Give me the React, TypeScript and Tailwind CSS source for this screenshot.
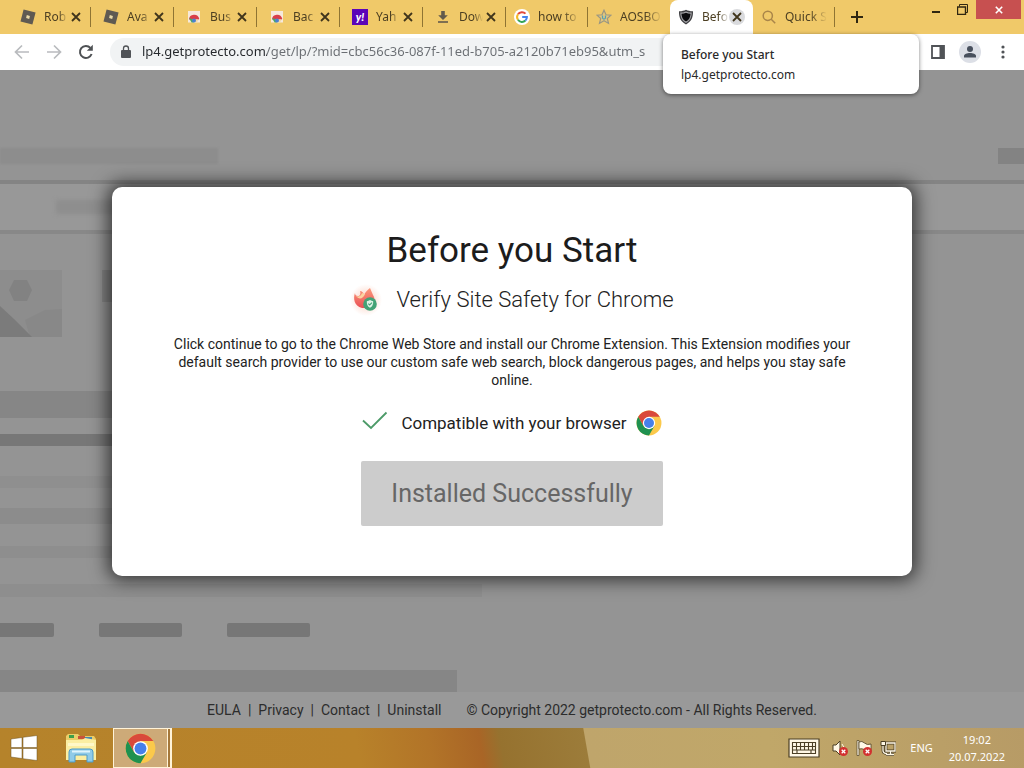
import type { ReactNode } from "react";

type Tab = {
  title: string;
  icon: ReactNode;
  closable?: boolean;
  active?: boolean;
};

function RobloxIcon() {
  return (
    <svg viewBox="0 0 16 16" className="size-4 shrink-0">
      <path d="M3.6 0.6 15.6 3.6 12.4 15.6 0.5 12.5Z" fill="#5f5a52" />
      <path d="M6.8 6.1 9.9 6.9 9.2 9.9 6.1 9.1Z" fill="#e9d9a8" />
    </svg>
  );
}

function WebStoreIcon() {
  return (
    <svg viewBox="0 0 16 16" className="size-4 shrink-0">
      <path d="M2 2h12v11.5H2z" fill="#f6e9dc" />
      <path d="M3 10.5A5.2 5.2 0 0 1 13.2 9.6L13 10.4H8Z" fill="#d93f48" />
      <path d="M3 9.2 5.6 13.6H8L6.4 10Z" fill="#4aa765" />
      <path d="M12.8 10.4 10.8 13.6H7.6L9.4 10.4Z" fill="#f1d9a8" />
      <circle cx="8" cy="11.4" r="2" fill="#4b7fd0" />
    </svg>
  );
}

function YahooIcon() {
  return (
    <span className="flex size-4 shrink-0 items-center justify-center bg-[#5b05b8] font-['Lato',sans-serif] text-[11px] leading-4 font-black text-white italic">
      y!
    </span>
  );
}

function DownloadIcon() {
  return (
    <svg viewBox="0 0 16 16" className="size-4 shrink-0" fill="#625a4c">
      <path d="M6.2 2h3.6v4.2h3L8 11 3.2 6.2h3Z" />
      <path d="M3 12.2h10v1.6H3z" />
    </svg>
  );
}

function GoogleIcon() {
  return (
    <svg viewBox="0 0 16 16" className="size-4 shrink-0" fill="none">
      <circle cx="8" cy="8" r="8" fill="#fff" />
      <g strokeWidth="2">
        <path d="M4 5.2A4.9 4.9 0 0 1 11.5 4.6" stroke="#e24a3b" />
        <path d="M4 10.8A4.9 4.9 0 0 1 4 5.2" stroke="#f4b928" />
        <path d="M11.4 11.6A4.9 4.9 0 0 1 4 10.8" stroke="#36a556" />
        <path d="M8.2 8.1H12.9A4.9 4.9 0 0 1 11.4 11.6" stroke="#4383ee" />
      </g>
    </svg>
  );
}

function StarIcon() {
  return (
    <svg viewBox="0 0 16 16" className="size-4 shrink-0">
      <path
        d="M8 1.2 10 5.8 15 6.2 11.3 9.5 12.5 14.4 8 11.8 3.5 14.4 4.7 9.5 1 6.2 6 5.8Z"
        fill="#e4c67c"
        stroke="#9b9782"
        strokeWidth="1.2"
      />
      <path d="M6.5 6.4V8.6a1.5 1.5 0 0 0 3 0V6.4" fill="none" stroke="#55a0b5" strokeWidth="1.3" />
    </svg>
  );
}

function ShieldIcon() {
  return (
    <svg viewBox="0 0 16 16" className="size-4 shrink-0">
      <path
        d="M8 .8C10 1.8 12.5 2.4 15 2.3 15.2 8.6 13.2 12.8 8 15.4 2.8 12.8.8 8.6 1 2.3 3.5 2.4 6 1.8 8 .8Z"
        fill="#3f3f42"
      />
      <path
        d="M8 2.4C9.8 3.2 11.6 3.6 13.7 3.6 13.6 8.4 12 11.8 8 13.9 4 11.8 2.4 8.4 2.3 3.6 4.4 3.6 6.2 3.2 8 2.4Z"
        fill="#a9a9ac"
      />
      <path
        d="M8 3.7C9.4 4.3 11 4.7 12.6 4.7 12.4 8.4 11 11 8 12.6 5 11 3.6 8.4 3.4 4.7 5 4.7 6.6 4.3 8 3.7Z"
        fill="#0c0c0e"
      />
    </svg>
  );
}

function SearchIcon() {
  return (
    <svg viewBox="0 0 16 16" className="size-4 shrink-0" fill="none" stroke="#a98549" strokeWidth="1.5">
      <circle cx="6.8" cy="6.8" r="4.6" />
      <path d="m10.2 10.2 4 4" />
    </svg>
  );
}

function ChromeLogo({ className }: { className: string }) {
  return (
    <svg viewBox="0 0 48 48" className={className}>
      <circle cx="24" cy="24" r="23" fill="#fbc94b" />
      <path d="M4.1 12.5A23 23 0 0 1 43.9 12.5H24L14 29.8Z" fill="#d9493b" />
      <path d="M4.1 12.5A23 23 0 0 0 24 47L34 29.7 24 35 14 29.8Z" fill="#1f9150" />
      <circle cx="24" cy="24" r="11.4" fill="#fff" />
      <circle cx="24" cy="24" r="9.2" fill="#4680ea" />
    </svg>
  );
}

function ExtensionLogo() {
  return (
    <svg viewBox="0 0 32 32" className="size-8 shrink-0">
      <defs>
        <radialGradient id="glow">
          <stop offset="50%" stopColor="#fde6de" />
          <stop offset="100%" stopColor="#fff" />
        </radialGradient>
        <linearGradient id="flame" x1="0" y1="0" x2="0" y2="1">
          <stop offset="0" stopColor="#fb9a7c" />
          <stop offset="1" stopColor="#ea4f55" />
        </linearGradient>
      </defs>
      <circle cx="16" cy="16" r="16" fill="url(#glow)" />
      <path
        d="M5 9C3 14 4 22 12 24L22 24C26 20 25 14 23 11L20 4C17 6 15 9 14 11 13 8 12 7 10 7 11 10 10 12 8 12 6 12 5 11 5 9Z"
        fill="url(#flame)"
      />
      <path d="M6 12C9 16 13 15 15 10L12 9C11 12 9 13 6 12Z" fill="#fbd3a0" />
      <circle cx="20" cy="20" r="6.8" fill="#43a276" />
      <path d="M16.8 17.2C18 17.2 19 16.8 20 16.1 21 16.8 22 17.2 23.2 17.2 23.3 20.4 22.4 22.4 20 23.8 17.6 22.4 16.7 20.4 16.8 17.2Z" fill="#dff3e6" />
      <path d="m18.3 19.6 1.4 1.4 2.3-2.4" fill="none" stroke="#43a276" strokeWidth="1.1" />
    </svg>
  );
}

const tabs: Tab[] = [
  { title: "Rob", icon: <RobloxIcon />, closable: true },
  { title: "Ava", icon: <RobloxIcon />, closable: true },
  { title: "Bus", icon: <WebStoreIcon />, closable: true },
  { title: "Bac", icon: <WebStoreIcon />, closable: true },
  { title: "Yah", icon: <YahooIcon />, closable: true },
  { title: "Dow", icon: <DownloadIcon />, closable: true },
  { title: "how to", icon: <GoogleIcon /> },
  { title: "AOSBO", icon: <StarIcon /> },
  { title: "Befo", icon: <ShieldIcon />, closable: true, active: true },
  { title: "Quick S", icon: <SearchIcon /> },
];

function CloseGlyph() {
  return (
    <svg viewBox="0 0 10 10" className="size-[10px]" fill="none" stroke="currentColor" strokeWidth="1.8">
      <path d="m1 1 8 8M9 1 1 9" />
    </svg>
  );
}

function BrowserTab({ tab }: { tab: Tab }) {
  const shape = tab.active
    ? "w-[83px] rounded-t-lg bg-white px-2"
    : tab.closable
      ? "w-[83px] pl-3 pr-[7px]"
      : "w-[82px] px-2";
  return (
    <div className={`flex h-full shrink-0 items-center ${shape}`}>
      {tab.icon}
      <span className="ml-2 min-w-0 flex-1 overflow-hidden text-xs whitespace-nowrap text-[#4c3f22] [mask-image:linear-gradient(to_right,#000_60%,transparent)]">
        {tab.title}
      </span>
      {tab.closable && (
        <button
          type="button"
          aria-label={`Close ${tab.title}`}
          className={`flex size-4 shrink-0 items-center justify-center rounded-full text-[#40351c] ${
            tab.active ? "bg-[#d9dadd]" : ""
          }`}
        >
          <CloseGlyph />
        </button>
      )}
    </div>
  );
}

function TitleBar() {
  return (
    <div className="flex h-[34px] bg-[#f0c969] pl-2">
      <div className="flex min-w-0 flex-1">
        {tabs.map((tab, i) => (
          <div key={tab.title} className="flex items-center">
            <BrowserTab tab={tab} />
            {!tab.active && !tabs[i + 1]?.active && (
              <span className="-ml-px h-5 w-px bg-[#8f7433]" />
            )}
          </div>
        ))}
        <button type="button" aria-label="New tab" className="ml-3 flex w-5 items-center justify-center">
          <svg viewBox="0 0 12 12" className="size-3" stroke="#2f2611" strokeWidth="2">
            <path d="M6 0v12M0 6h12" />
          </svg>
        </button>
      </div>
      <div className="flex items-start pr-[3px]">
        <button type="button" aria-label="Minimize" className="flex h-[19px] w-6 items-center justify-center">
          <span className="mt-1 h-[2px] w-2 bg-[#2f2611]" />
        </button>
        <button type="button" aria-label="Restore" className="flex h-[19px] w-7 items-center justify-center">
          <svg viewBox="0 0 11 11" className="size-[11px]" fill="none" stroke="#2f2611">
            <path d="M2.5 2.5V.5h8v8h-2" />
            <path d="M.5 3h8v7.500h-8z" strokeWidth="1.4" />
          </svg>
        </button>
        <button type="button" aria-label="Close window" className="flex h-[19px] w-[45px] items-center justify-center bg-[#c75050] text-white">
          <svg viewBox="0 0 10 10" className="size-2" fill="none" stroke="currentColor" strokeWidth="2">
            <path d="m1 1 8 8M9 1 1 9" />
          </svg>
        </button>
      </div>
    </div>
  );
}

function Toolbar() {
  return (
    <div className="flex h-9 items-center bg-white pr-[11px]">
      <button type="button" aria-label="Back" className="ml-[14px] text-[#b9bbbe]">
        <svg viewBox="0 0 16 16" className="size-4" fill="none" stroke="currentColor" strokeWidth="1.7">
          <path d="M15 8H2M8 1.500 1.500 8 8 14.500" />
        </svg>
      </button>
      <button type="button" aria-label="Forward" className="ml-4 text-[#b9bbbe]">
        <svg viewBox="0 0 16 16" className="size-4" fill="none" stroke="currentColor" strokeWidth="1.7">
          <path d="M1 8h13M8 1.500 14.500 8 8 14.500" />
        </svg>
      </button>
      <button type="button" aria-label="Reload" className="ml-4 text-[#4e5154]">
        <svg viewBox="0 0 16 16" className="size-4" fill="none" stroke="currentColor" strokeWidth="2">
          <path d="M13.600 10A6 6 0 1 1 12.400 3.900" />
          <path d="M14.800.8v6H8.800Z" fill="currentColor" stroke="none" />
        </svg>
      </button>
      <div className="ml-4 flex h-7 flex-1 items-center rounded-full bg-[#f1f3f4] pl-[11px]">
        <svg viewBox="0 0 10 14" className="h-[14px] w-[10px] shrink-0" fill="#505357">
          <path d="M1 5h8a1 1 0 0 1 1 1v6a1 1 0 0 1-1 1H1a1 1 0 0 1-1-1V6a1 1 0 0 1 1-1Z" />
          <path d="M2.500 5.500V3.500a2.500 2.500 0 0 1 5 0v2" fill="none" stroke="#505357" strokeWidth="1.300" />
        </svg>
        <input
          type="text"
          aria-label="Address"
          readOnly
          value="lp4.getprotecto.com/get/lp/?mid=cbc56c36-087f-11ed-b705-a2120b71eb95&utm_s"
          className="ml-[11px] min-w-0 flex-1 bg-[linear-gradient(to_right,#25282c_125px,#6a6e73_125px)] bg-clip-text text-[13px] text-transparent outline-none"
        />
      </div>
      <button type="button" aria-label="Side panel" className="ml-4">
        <svg viewBox="0 0 14 14" className="size-[14px]">
          <path d="M1 1h12v12H1z" fill="none" stroke="#505357" strokeWidth="1.800" />
          <path d="M8.500 1H13v12H8.500z" fill="#505357" />
        </svg>
      </button>
      <button type="button" aria-label="Profile" className="ml-[14px] flex size-[22px] items-center justify-center rounded-full bg-[#dcdfe6]">
        <svg viewBox="0 0 14 14" className="size-[14px]" fill="#48505d">
          <circle cx="7" cy="4" r="3" />
          <path d="M1 12.500V11c0-2 3-3 6-3s6 1 6 3v1.500Z" />
        </svg>
      </button>
      <button type="button" aria-label="Menu" className="ml-3 flex w-5 justify-center">
        <svg viewBox="0 0 4 14" className="h-[14px] w-1" fill="#505357">
          <circle cx="2" cy="2" r="1.600" />
          <circle cx="2" cy="7" r="1.600" />
          <circle cx="2" cy="12" r="1.600" />
        </svg>
      </button>
    </div>
  );
}

function TabTooltip() {
  return (
    <div
      role="tooltip"
      className="absolute top-[34px] left-[663px] z-20 w-64 rounded-lg bg-white px-[18px] pt-[11px] pb-[9px] text-xs leading-5 text-[#2a2a2a] shadow-[0_1px_4px_rgba(0,0,0,0.5)]"
    >
      <p className="font-medium">Before you Start</p>
      <p>lp4.getprotecto.com</p>
    </div>
  );
}

// Greyed-out page skeleton that sits behind the dialog.
function Skeleton() {
  return (
    <div aria-hidden="true" className="flex flex-1 flex-col bg-[#949494]">
      <div className="flex h-[110px] items-end justify-between pb-4">
        <span className="h-4 w-[218px] bg-[#8d8d8d] blur-[1px]" />
        <span className="h-4 w-[26px] bg-[#838383]" />
      </div>
      <div className="h-[54px] border-y-4 border-t-[#848484] border-b-[#888] bg-[#989898] pt-4">
        <span className="ml-14 block h-[14px] w-24 bg-[#8e8e8e] blur-[2px]" />
      </div>
      <div className="mt-9 flex gap-10">
        <svg viewBox="0 0 62 67" className="h-[67px] w-[62px]">
          <path d="M0 0h62v67H0z" fill="#8d8d8d" />
          <path d="M14 10h13l5 10-5 11H14L9 20Z" fill="#828282" />
          <path d="M25 50 45 40 62 39V67H30Z" fill="#888" />
          <path d="M0 36 14 49 32 67H0Z" fill="#7b7b7b" />
        </svg>
        <span className="h-8 w-32 bg-[#858585]" />
      </div>
      <span className="mt-[54px] h-[27px] w-[482px] bg-[#868686]" />
      <span className="mt-4 h-3 w-[482px] bg-[#777]" />
      <span className="mt-[30px] h-3 w-[482px] bg-[#8f8f8f]" />
      <span className="mt-5 h-4 w-[482px] bg-[#8c8c8c]" />
      <span className="mt-[22px] h-3 w-[482px] bg-[#8e8e8e]" />
      <span className="mt-[26px] h-[13px] w-[482px] bg-[#8e8e8e]" />
      <div className="mt-[26px] flex gap-[45px]">
        <span className="h-[14px] w-[54px] rounded-r-xs bg-[#777]" />
        <span className="h-[14px] w-[83px] rounded-xs bg-[#777]" />
        <span className="h-[14px] w-[83px] rounded-xs bg-[#777]" />
      </div>
      <span className="mt-[33px] h-[22px] w-[457px] bg-[#868686]" />
    </div>
  );
}

function StartDialog() {
  return (
    <div className="absolute inset-0 flex items-center justify-center overflow-hidden px-4">
      <section
        role="dialog"
        aria-labelledby="dialog-title"
        className="flex w-full max-w-[800px] flex-col items-center rounded-[10px] bg-white px-[60px] pt-10 pb-[50px] text-center text-[#222] shadow-[0_0_18px_4px_rgba(0,0,0,0.65)]"
      >
        <h1 id="dialog-title" className="text-[35px] leading-[48px] text-[#1c1c1c]">
          Before you Start
        </h1>
        <div className="mt-[7px] flex items-center gap-[14px]">
          <ExtensionLogo />
          <h2 className="text-[22px] leading-9 font-light">Verify Site Safety for Chrome</h2>
        </div>
        <p className="mt-[17px] text-sm leading-[18px]">
          Click continue to go to the Chrome Web Store and install our Chrome Extension. This
          Extension modifies your default search provider to use our custom safe web search, block
          dangerous pages, and helps you stay safe online.
        </p>
        <div className="mt-5 flex items-center">
          <svg viewBox="0 0 26 20" className="mr-[13px] mb-1 h-5 w-[26px]" fill="none" stroke="#4c9a68" strokeWidth="1.800">
            <path d="m1 9.500 8 7.500L24.500 1.500" />
          </svg>
          <span className="text-[17px] leading-7">Compatible with your browser</span>
          <ChromeLogo className="ml-[9px] size-[26px]" />
        </div>
        <button type="button" className="mt-6 rounded-[2px] bg-[#ccc] px-[30px] py-4 text-[25px] leading-[33px] text-[#666]">
          Installed Successfully
        </button>
      </section>
    </div>
  );
}

const footerLinks = ["EULA", "Privacy", "Contact", "Uninstall"];

function PageFooter() {
  return (
    <footer className="flex h-9 items-center justify-center bg-[#999] pb-px text-sm text-[#2c2c2c]">
      <nav className="flex">
        {footerLinks.map((label, i) => (
          <span key={label} className="flex">
            {i > 0 && <span className="mx-[7px]">|</span>}
            <a href="#">{label}</a>
          </span>
        ))}
      </nav>
      <span className="ml-[25px]">© Copyright 2022 getprotecto.com - All Rights Reserved.</span>
    </footer>
  );
}

function RedBadge() {
  return (
    <g>
      <circle cx="11.500" cy="11.500" r="4.500" fill="#d2302f" />
      <path d="m9.700 9.700 3.600 3.600m0-3.600-3.600 3.600" stroke="#fff" strokeWidth="1.300" />
    </g>
  );
}

function Taskbar() {
  return (
    <div className="flex h-10 items-stretch bg-[linear-gradient(80deg,#b5832b_0%,#b8822a_35%,#b27428_42%,#a96526_47%,#96722f_49%,#9c7c3a_57.200%,#bfa56b_57.300%,#c0a769_75%,#b79b66_100%)]">
      <button type="button" aria-label="Start" className="flex w-12 items-center justify-center">
        <svg viewBox="0 0 28 26" className="h-[26px] w-7" fill="#fff" stroke="#6b5120" strokeWidth="0.500">
          <path d="M1 4 12 2.500V12.500H1ZM13 2.300 27 .5V12.500H13ZM1 13.500H12V23.500L1 22ZM13 13.500H27V25.500L13 23.700Z" />
        </svg>
      </button>
      <button type="button" aria-label="File Explorer" className="flex w-[65px] items-center justify-center">
        <svg viewBox="0 0 32 30" className="h-[30px] w-8">
          <path d="M1 3 3 1H13L15 3H29L31 6V26H1Z" fill="#e9cd69" />
          <path d="M4 2h5v3H4z" fill="#3e9e4a" />
          <path d="M13 3h7v3h-7z" fill="#c9543a" />
          <path d="M20 4h7v3h-7z" fill="#4689b0" />
          <path d="M1 7H17L20 5 31 7V27H1Z" fill="#fbeea2" />
          <path d="M3 10H29V13H3Z" fill="#fff8c8" />
          <path d="M4 29V19Q4 16 7 16H25Q28 16 28 19V29H22V22H10V29Z" fill="#8fcbe8" stroke="#4c9bc8" />
          <path d="M7 18.500H25" stroke="#dff4fc" strokeWidth="2" />
        </svg>
      </button>
      <button
        type="button"
        aria-label="Google Chrome"
        className="flex w-[55px] items-center justify-center border border-[#fff3d8] bg-[#cdaa78]"
      >
        <ChromeLogo className="size-[31px]" />
      </button>
      <span className="w-1 border-y border-r-2 border-[#fff3d8] bg-[#a5783a]" />
      <div className="ml-auto flex items-center pr-[19px] text-[11px] text-white">
        <svg viewBox="0 0 32 20" className="h-5 w-8">
          <path d="M1 1h30v18H1z" fill="#fff8e6" stroke="#4b3f25" strokeWidth="1.200" />
          <path
            d="M4 4.500h24M4 8.500h24M4 12h24M4 15.500h24M4.500 4v12M8.500 4v8M12.500 4v8M16.500 4v8M20.500 4v8M24.500 4v8M27.500 4v12M9 12v4M23 12v4"
            fill="none"
            stroke="#4b3f25"
            strokeWidth="1.100"
          />
        </svg>
        <svg viewBox="0 0 16 16" className="ml-3 size-4">
          <path d="M1 5h3l4-4v14l-4-4H1Z" fill="#fff8e6" stroke="#4b3f25" />
          <path d="M10 4q3 3 1 6" fill="none" stroke="#fff8e6" />
          <RedBadge />
        </svg>
        <svg viewBox="0 0 16 16" className="ml-2 size-4">
          <path d="M1 .5h2v15H1Z" fill="#fff8e6" stroke="#4b3f25" strokeWidth="0.700" />
          <path d="M3 2q3-1.500 5.500 1T15 4v7q-3 1-6-1t-6-1Z" fill="#fff8e6" stroke="#4b3f25" strokeWidth="0.800" />
          <RedBadge />
        </svg>
        <svg viewBox="0 0 16 16" className="ml-2 size-4" fill="none">
          <path d="M6 3h9v8H6ZM10.500 11v3M6 14.500h8M3 6v4.500q0 3 4 3" stroke="#4b3f25" strokeWidth="2.800" />
          <path d="M6 3h9v8H6ZM10.500 11v3M6 14.500h8M3 6v4.500q0 3 4 3" stroke="#fff8e6" strokeWidth="1.300" />
          <path d="M1 1.500h4.500v4H1z" fill="#fff8e6" stroke="#4b3f25" />
        </svg>
        <span className="ml-[14px]">ENG</span>
        <div className="ml-4 text-center leading-[17px]">
          <p>19:02</p>
          <p>20.07.2022</p>
        </div>
      </div>
    </div>
  );
}

export default function App() {
  return (
    <div className="relative flex min-h-screen flex-col font-['Noto_Sans',sans-serif]">
      <TitleBar />
      <Toolbar />
      <TabTooltip />
      <main className="flex flex-1 flex-col font-['Roboto',sans-serif]">
        <div className="relative flex flex-1 flex-col">
          <Skeleton />
          <StartDialog />
        </div>
        <PageFooter />
      </main>
      <Taskbar />
    </div>
  );
}
